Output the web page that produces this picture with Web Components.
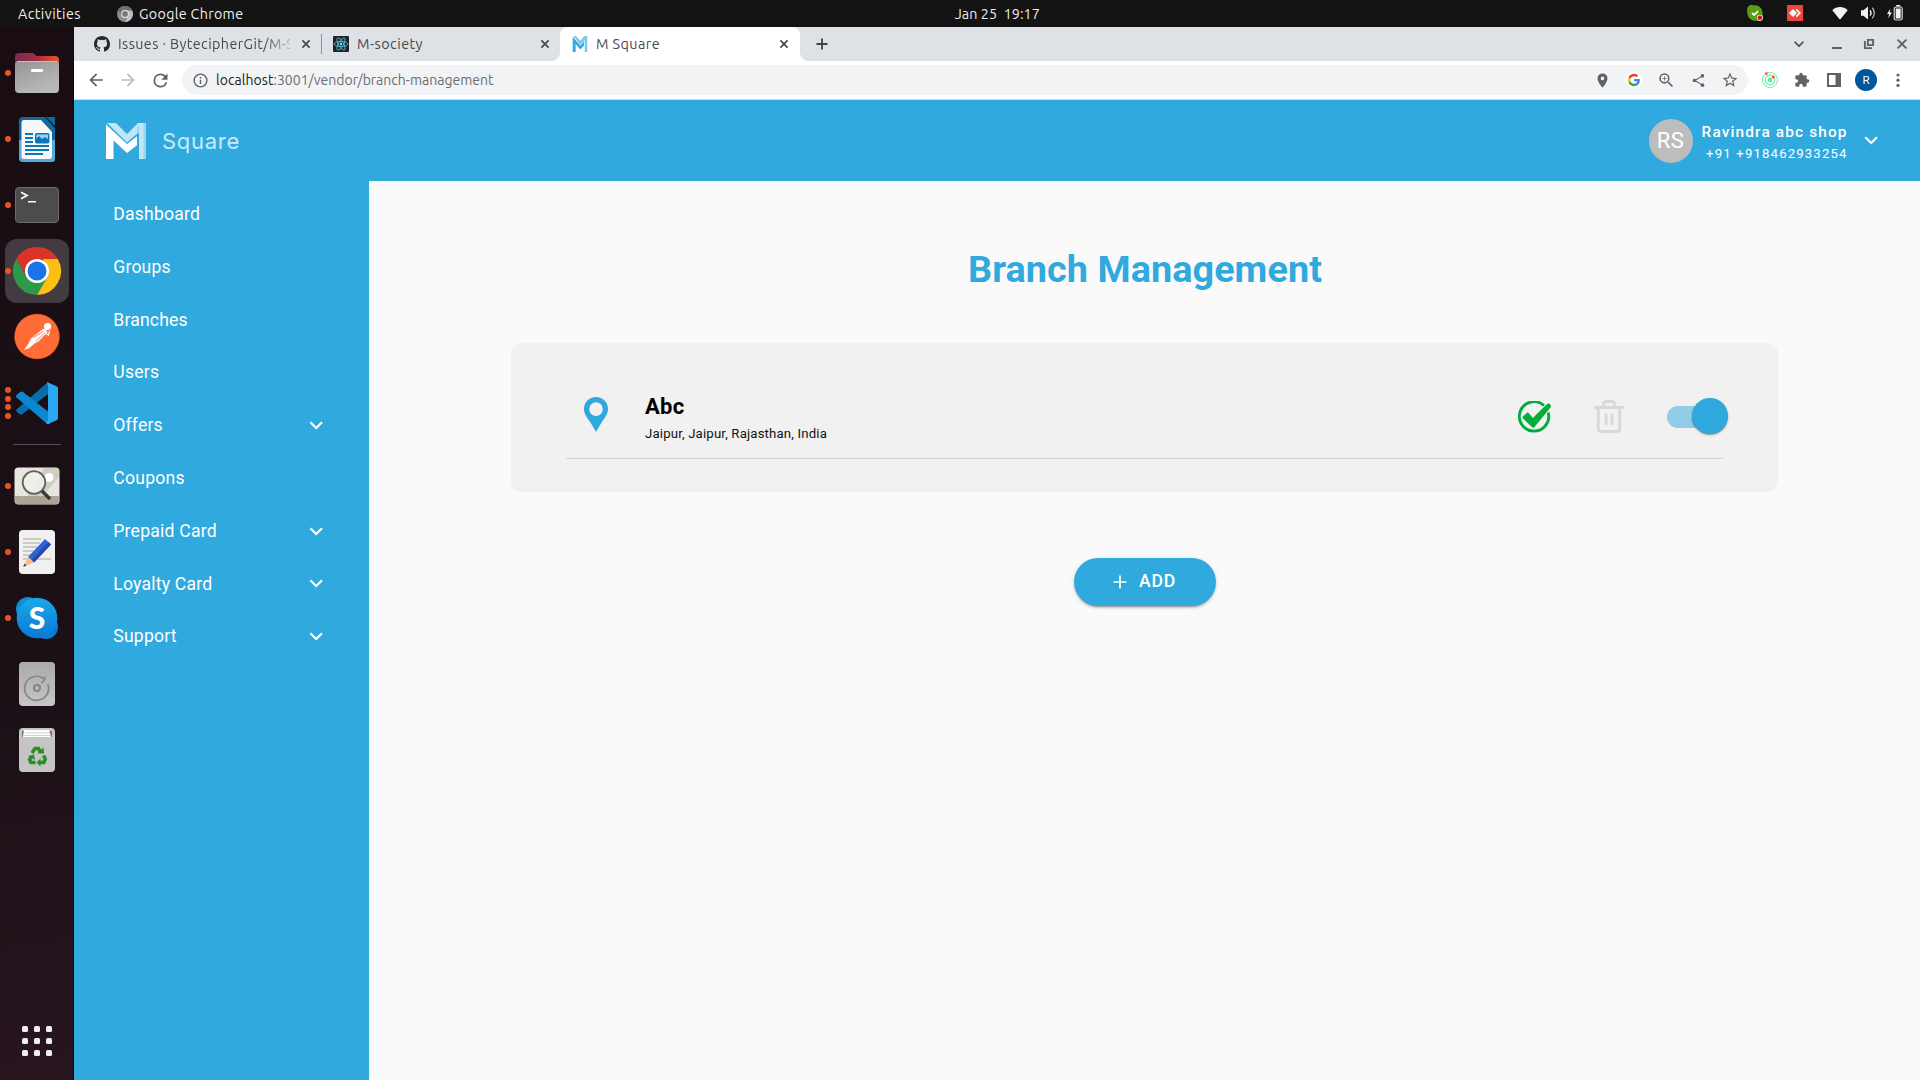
<!DOCTYPE html>
<html lang="en">
<head>
<meta charset="utf-8">
<title>M Square</title>
<style>
html,body{margin:0;height:100%;overflow:hidden;background:#131313}
</style>
</head>
<body>
<desktop-screen></desktop-screen>
<script>
const def=(name,html,extra)=>{
  const t=document.createElement('template');t.innerHTML=html;
  customElements.define(name,class extends HTMLElement{
    connectedCallback(){
      if(this.shadowRoot)return;
      this.attachShadow({mode:'open'}).append(t.content.cloneNode(true));
      if(extra)extra.call(this,this.shadowRoot);
    }
  });
};

/* A one-line label whose tracking is adjusted so it spans the "w" attribute. */
def('fit-text',`<style>:host{display:inline-block;white-space:pre;flex:none}span{display:inline-block}</style><span><slot></slot></span>`,function(r){
  const w=parseFloat(this.getAttribute('w'));
  const s=r.querySelector('span'),n=this.textContent.length;
  const fit=()=>{s.style.letterSpacing='0px';const c=s.getBoundingClientRect().width;if(c)s.style.letterSpacing=((w-c)/n)+'px';this.style.width=w+'px'};
  requestAnimationFrame(fit);fit();
});

/* Small icon set */
const ICONS={
 chevron:['0 0 24 24','<path fill="currentColor" d="M7.41 8.59 12 13.17l4.59-4.58L18 10l-6 6-6-6z"/>'],
 close:['0 0 16 16','<path d="M4.4 4.4l7.2 7.2M11.6 4.4l-7.2 7.2" stroke="currentColor" stroke-width="1.7" fill="none"/>'],
 wclose:['0 0 16 16','<path d="M3.6 3.6l8.8 8.8M12.4 3.6l-8.8 8.8" stroke="currentColor" stroke-width="2" fill="none"/>'],
 wmin:['0 0 16 16','<path d="M3 11h10v2H3z" fill="currentColor"/>'],
 wrestore:['0 0 16 16','<path d="M6.9 3.9h5.2v5.2H6.9z" stroke="currentColor" stroke-width="1.9" fill="none"/><path d="M3.9 5v7.1H11" stroke="currentColor" stroke-width="1.9" fill="none"/>'],
 plus:['0 0 16 16','<path d="M8 2.500v11M2.500 8h11" stroke="currentColor" stroke-width="1.8"/>'],
 addplus:['0 0 14 14','<path d="M7 .500v13M.500 7h13" stroke="currentColor" stroke-width="1.7"/>'],
 back:['0 0 24 24','<path fill="currentColor" d="M20 11H7.83l5.59-5.59L12 4l-8 8 8 8 1.41-1.41L7.83 13H20z"/>'],
 fwd:['0 0 24 24','<path fill="currentColor" d="M12 4l-1.41 1.41L16.17 11H4v2h12.17l-5.58 5.59L12 20l8-8z"/>'],
 reload:['0 0 24 24','<path fill="currentColor" d="M17.65 6.35A7.96 7.96 0 0 0 12 4a8 8 0 1 0 7.73 10h-2.08A6 6 0 1 1 12 6c1.66 0 3.14.69 4.22 1.78L13 11h7V4z"/>'],
 info:['0 0 24 24','<path fill="currentColor" d="M11 7h2v2h-2zm0 4h2v6h-2zm1-9a10 10 0 1 0 0 20 10 10 0 0 0 0-20zm0 18a8 8 0 1 1 0-16 8 8 0 0 1 0 16z"/>'],
 place:['0 0 24 24','<path fill="currentColor" d="M12 2a7 7 0 0 0-7 7c0 5.25 7 13 7 13s7-7.75 7-13a7 7 0 0 0-7-7zm0 9.5a2.5 2.5 0 1 1 0-5 2.5 2.5 0 0 1 0 5z"/>'],
 google:['0 0 48 48','<circle cx="24" cy="24" r="24" fill="#fff"/><g transform="translate(5.5 5.5) scale(.77)"><path fill="#EA4335" d="M24 9.5c3.54 0 6.71 1.22 9.21 3.6l6.85-6.85C35.9 2.38 30.47 0 24 0 14.62 0 6.51 5.38 2.56 13.22l7.98 6.19C12.43 13.72 17.74 9.5 24 9.5z"/><path fill="#4285F4" d="M46.98 24.55c0-1.57-.15-3.09-.38-4.55H24v9.02h12.94c-.58 2.96-2.26 5.48-4.78 7.18l7.73 6c4.51-4.18 7.09-10.36 7.09-17.65z"/><path fill="#FBBC05" d="M10.53 28.59a14.5 14.5 0 0 1 0-9.18l-7.98-6.19a24 24 0 0 0 0 21.56z"/><path fill="#34A853" d="M24 48c6.48 0 11.93-2.13 15.89-5.81l-7.73-6c-2.15 1.45-4.92 2.3-8.16 2.3-6.26 0-11.57-4.22-13.47-9.91l-7.98 6.19C6.51 42.62 14.62 48 24 48z"/></g>'],
 zoom:['0 0 24 24','<path fill="currentColor" d="M15.5 14h-.79l-.28-.27A6.47 6.47 0 0 0 16 9.5 6.5 6.5 0 1 0 9.5 16c1.61 0 3.09-.59 4.23-1.57l.27.28v.79l5 4.99L20.49 19zm-6 0a4.5 4.5 0 1 1 0-9 4.5 4.5 0 0 1 0 9zM10 7H9v2H7v1h2v2h1v-2h2V9h-2z" transform="translate(-1.6 -1.6) scale(1.12)"/>'],
 share:['0 0 24 24','<path d="M18 5L6 12l12 7" stroke="currentColor" stroke-width="1.8" fill="none"/><g fill="currentColor"><circle cx="18.3" cy="4.6" r="2.9"/><circle cx="5.5" cy="12" r="2.9"/><circle cx="18.3" cy="19.4" r="2.9"/></g>'],
 star:['0 0 24 24','<path fill="currentColor" d="M22 9.24l-7.19-.62L12 2 9.19 8.63 2 9.24l5.46 4.73L5.82 21 12 17.27 18.18 21l-1.63-7.03zM12 15.4l-3.76 2.27 1-4.28-3.32-2.88 4.38-.38L12 6.1l1.71 4.04 4.38.38-3.32 2.88 1 4.28z"/>'],
 orbit:['0 0 16 16','<g fill="none" stroke="#6ff0a0" stroke-width="1"><circle cx="8" cy="8" r="7.5"/><circle cx="8" cy="8" r="4.8" stroke="#6fe8b8" stroke-width="1.2"/></g><circle cx="8" cy="8" r="2.4" fill="#5ff09a"/><circle cx="4.3" cy="1.7" r="1.6" fill="#ff7a3c"/><circle cx="11.3" cy="5" r="1.6" fill="#ff5a2c"/>'],
 puzzle:['0 0 24 24','<path fill="currentColor" d="M20.5 11H19V7a2 2 0 0 0-2-2h-4V3.5a2.5 2.5 0 0 0-5 0V5H4a2 2 0 0 0-2 2v3.8h1.5a2.7 2.7 0 0 1 0 5.4H2V20a2 2 0 0 0 2 2h3.8v-1.5a2.7 2.7 0 0 1 5.4 0V22H17a2 2 0 0 0 2-2v-4h1.5a2.5 2.5 0 0 0 0-5z"/>'],
 panel:['0 0 16 16','<path fill="currentColor" fill-rule="evenodd" d="M1 1h14v14H1zM3 3v10h6.5V3z"/>'],
 more:['0 0 16 16','<g fill="currentColor"><circle cx="8" cy="3" r="1.6"/><circle cx="8" cy="8.2" r="1.6"/><circle cx="8" cy="13.4" r="1.6"/></g>'],
 github:['0 0 16 16','<path fill="#24292f" d="M8 0C3.58 0 0 3.58 0 8c0 3.54 2.29 6.53 5.47 7.59.4.07.55-.17.55-.38 0-.19-.01-.82-.01-1.49-2.01.37-2.53-.49-2.69-.94-.09-.23-.48-.94-.82-1.13-.28-.15-.68-.52-.01-.53.63-.01 1.08.58 1.23.82.72 1.21 1.87.87 2.33.66.07-.52.28-.87.51-1.07-1.78-.2-3.64-.89-3.64-3.95 0-.87.31-1.59.82-2.15-.08-.2-.36-1.02.08-2.12 0 0 .67-.21 2.2.82a7.6 7.6 0 0 1 4 0c1.53-1.04 2.2-.82 2.2-.82.44 1.1.16 1.92.08 2.12.51.56.82 1.27.82 2.15 0 3.07-1.87 3.75-3.65 3.95.29.25.54.73.54 1.48 0 1.07-.01 1.93-.01 2.2 0 .21.15.46.55.38A8 8 0 0 0 16 8c0-4.42-3.58-8-8-8z"/>'],
 react:['0 0 16 16','<rect width="16" height="16" rx="1" fill="#20232a"/><g fill="none" stroke="#5bc4df" stroke-width=".8"><ellipse cx="8" cy="8" rx="6.8" ry="2.6"/><ellipse cx="8" cy="8" rx="6.8" ry="2.6" transform="rotate(60 8 8)"/><ellipse cx="8" cy="8" rx="6.8" ry="2.6" transform="rotate(120 8 8)"/></g><circle cx="8" cy="8" r="1.4" fill="#61dafb"/>'],
 mtab:['0 0 40 44','<path fill="#7cc8ea" d="M1 0H9L21 13 32 0h8v44h-7V12L21 25z"/><path fill="#2fa9dd" d="M0 2L21 27 31 16v10L21 37 8 22v22H0z"/>'],
 mlogo:['0 0 40 36','<path fill="#c1e5f5" d="M1 0H10L21 11 32 0h8v36h-7V9L21 19.5z"/><path fill="#9ad5ef" d="M37.500 0H40v36h-2.500zM31 4l2-2v7.500l-2 2z"/><path fill="#fff" d="M0 1.500L21 21 31 13.200v9L21 30 7.500 17.500V36H0z"/>'],
 chromegrey:['0 0 16 16','<circle cx="8" cy="8" r="8" fill="#8c8c8c"/><path fill="#6f6f6f" d="M1 4A8 8 0 0 1 15 4H8L4.500 10z"/><path fill="#c0c0c0" d="M15.200 5A8 8 0 0 1 8 16L12 8.500 11 5z"/><circle cx="8" cy="8" r="3.900" fill="#eee"/><circle cx="8" cy="8" r="2.900" fill="#777"/>'],
 skypetray:['0 0 16 16','<path fill="#5a9b14" d="M4.500 0C6 0 6.500.400 7.500.400a7.500 7.500 0 0 1 8 8.500c.600 3-1 6.600-4.500 6.900C6 16.500 1 14 .500 9-.400 5 0 0 4.500 0z"/><path d="M5 8l2.200 2L11 6.200" stroke="#fff" stroke-width="1.700" fill="none"/><circle cx="12.900" cy="12.800" r="3.100" fill="#f4dede"/><circle cx="12.900" cy="12.800" r="2.300" fill="#d4141c"/>'],
 anydesk:['0 0 16 16','<path fill="#ef443b" d="M0 0h16v16H0z"/><path fill="#fff" d="M2 8l4-4 4 4-4 4zM8.600 5l1.200-1.200L14 8l-4.200 4.200L8.600 11l3-3z"/>'],
 wifi:['0 0 16 16','<path fill="#f2f2f2" d="M.300 5.200C4.500.900 11.500.900 15.700 5.200L8.600 14a.800.800 0 0 1-1.200 0z"/>'],
 volume:['0 0 16 16','<path fill="#f2f2f2" d="M1 5.200h2.500L8 1.400v13.200L3.500 10.800H1z"/><path d="M10 5.400a4 4 0 0 1 0 5.200" stroke="#f2f2f2" stroke-width="1.300" fill="none"/><path d="M12.200 2.800a7.500 7.500 0 0 1 0 10.400" stroke="#b8b8b8" stroke-width="1.300" fill="none"/>'],
 battery:['0 0 16 16','<path fill="#f2f2f2" d="M3.400 3.800L0 9h2.100l-.900 4.300L5 7.600H2.700z"/><rect x="7.200" y="2" width="8" height="13" rx="1.800" fill="none" stroke="#d8d8d8" stroke-width="1.200"/><path fill="#f2f2f2" d="M9.200 0h4v1.600h-4zM8.700 3.600h5v9.800h-5z"/>'],
 pin:['0 0 24 35','<path fill="#2fa9dd" fill-rule="evenodd" d="M12 0a12 12 0 0 0-12 12.300C0 17 3 20.500 6 25c2.600 4 4.500 7 6 10 1.500-3 3.400-6 6-10 3-4.500 6-8 6-12.700A12 12 0 0 0 12 0zm0 5.300a6.800 6.800 0 1 1 0 13.600 6.800 6.800 0 0 1 0-13.600z"/>'],
 check:['0 0 33 32','<path d="M26 4.600A14.700 14.700 0 1 0 30.200 11.500" fill="none" stroke="#00ae3b" stroke-width="2.900"/><path fill="#00ae3b" stroke="#f1f1f1" stroke-width="1.400" paint-order="stroke" d="M4.800 15.600L9 11.700q1-.700 1.800.300l4 5L28.800 3.200q1.700-1.600 3.300.100 1.500 1.700.400 3.300L16.500 25.900q-1.300 1.500-2.600.100L5 17.500q-1-1-.200-1.900z"/>'],
 trash:['0 0 30 33','<g fill="none" stroke="#d5d9dc" stroke-width="3" stroke-linecap="round" stroke-linejoin="round"><path d="M1.500 7.500h27M4.300 8v20.500q0 3 3 3h15.400q3 0 3-3V8M9.500 7V4.500q0-3 3-3h5q3 0 3 3V7M12.100 15v9M18 15v9" stroke-width="2.900"/></g>'],
};
def('ui-icon',`<style>:host{display:inline-flex;flex:none;align-items:center;justify-content:center}svg{display:block}</style>`,function(r){
  const [vb,body]=ICONS[this.getAttribute('name')];
  const w=this.getAttribute('w')||16,h=this.getAttribute('h')||w;
  const b=document.createElement('div');
  b.innerHTML=`<svg width="${w}" height="${h}" viewBox="${vb}">${body}</svg>`;r.append(b);
});

/* GNOME top bar */
def('top-bar',`<style>
:host{display:flex;height:27px;background:#131313;color:#eee;font:14.300px/27px Ubuntu,"Noto Sans",sans-serif;align-items:center}
.l,.r{flex:1;display:flex;align-items:center}
.l{padding-left:18px;box-sizing:border-box}.l ui-icon{margin:0 6px 0 36px}
.r{justify-content:flex-end;padding-right:17.500px}
.r{margin-top:-1px}
.c{padding-right:0;margin-left:74px}
fit-text{height:27px;line-height:28px}
</style>
<div class="l"><fit-text w="63">Activities</fit-text><ui-icon name="chromegrey"></ui-icon><fit-text w="104.5">Google Chrome</fit-text></div>
<div class="c"><fit-text w="85">Jan 25  19:17</fit-text></div>
<div class="r"><ui-icon name="skypetray" style="margin-right:24px"></ui-icon><ui-icon name="anydesk" style="margin-right:29px"></ui-icon><ui-icon name="wifi" style="margin-right:12px"></ui-icon><ui-icon name="volume" style="margin-right:11px"></ui-icon><ui-icon name="battery"></ui-icon></div>`);

/* Dock */
def('dock-item',`<style>
:host{display:block;position:relative;width:64px;height:64px;flex:none;border-radius:12px}
:host([active]){background:#443b42}
.d{position:absolute;left:0;top:0;height:64px;display:flex;flex-direction:column;justify-content:center;gap:2.700px}
i{width:6px;height:6px;border-radius:50%;background:#e95420}
</style><slot></slot><div class="d"></div>`,function(r){
  r.querySelector('.d').innerHTML='<i></i>'.repeat(+this.getAttribute('dots')||0);
});
def('app-dock',`<style>
:host{display:flex;flex-direction:column;width:74px;box-sizing:border-box;border-right:1px solid #08050a;padding:14px 0 7px 5px;gap:2px;background:linear-gradient(170deg,#190d13,#1a1016 60%,#27151f)}
svg{display:block;width:64px;height:64px}
hr{border:0;margin:7px 0 7px 8px;width:48px;height:1px;background:#57505a}
.sp{flex:1}
</style>
<dock-item dots="1"><svg viewBox="5 41 64 64"><defs><linearGradient id="f"><stop stop-color="#762a52"/><stop offset=".5" stop-color="#a33048"/><stop offset="1" stop-color="#e95420"/></linearGradient><linearGradient id="g" x1="0" y1="0" x2=".5" y2="1"><stop stop-color="#949494"/><stop offset="1" stop-color="#b9b9b9"/></linearGradient></defs><path fill="url(#f)" d="M15 57q0-4 4-4h13q2 0 3 1.500l1 1.500h19q4 0 4 4v10H15z"/><rect x="15" y="61" width="44" height="32" rx="4" fill="url(#g)"/><path d="M17 61.500h40" stroke="#c0c0c0" stroke-width="1"/><rect x="31" y="69" width="12" height="3" rx="1" fill="#fff"/></svg></dock-item>
<dock-item dots="1"><svg viewBox="5 107 64 64"><path fill="#0e6ba0" d="M23 117h22l10 11v33q0 1-4 1H23q-4 0-4-4v-37q0-4 4-4z"/><path fill="#53abd5" d="M19 140h36v18q0 4-4 4H23q-4 0-4-4z"/><path fill="#0e6ba0" d="M46 117h9v9z"/><path fill="#f6f8fa" d="M24 120h17l11 12v24q0 3-3 3H24q-2.500 0-2.500-3v-33q0-3 2.500-3z"/><path d="M25 134h8M25 138h8M25 142h8M25 146h24M25 150h24M25 154h18" stroke="#0878b8" stroke-width="2"/><rect x="35.700" y="133.700" width="13" height="9" rx="1" fill="#9bd2ef" stroke="#0878b8" stroke-width="1.400"/><path fill="#0878b8" d="M36 142v-3l3-3 3 3 3-2 3 2v3z"/></svg></dock-item>
<dock-item dots="1"><svg viewBox="5 173 64 64"><rect x="15.500" y="187.500" width="43" height="35" rx="3.500" fill="#4c4c4c" stroke="#6b6b6b"/><path d="M21 192.300l6 3.200-6 3.200" fill="none" stroke="#fff" stroke-width="1.700"/><path fill="#fff" d="M28 201h8v1.500h-8z"/></svg></dock-item>
<dock-item dots="1" active><svg viewBox="5 239 64 64"><path fill="#db3328" d="M16.200 259A24 24 0 0 1 57.800 259L37 260 27 277z"/><path fill="#2c9a48" d="M16.200 259A24 24 0 0 0 37 295L47.400 277 37 271 26.600 277z"/><path fill="#fcc014" d="M57.800 259A24 24 0 0 1 37 295L47.400 277 43 259z"/><circle cx="37" cy="271" r="12" fill="#fff"/><circle cx="37" cy="271" r="9.500" fill="#1a73e8"/></svg></dock-item>
<dock-item><svg viewBox="5 305 64 64"><circle cx="37" cy="336.500" r="22.500" fill="#ff6c37"/><circle cx="37" cy="336.500" r="22.300" fill="none" stroke="#d9541f" stroke-width=".6"/><circle cx="47.500" cy="326.500" r="3.600" fill="#fff"/><path fill="#fff" d="M43.500 328.500q3 .500 4 3.500L38.500 341.500l-4 2-5 4.500-5.500 2 4-5.500 3-6z"/><path d="M33.500 337.500l9.500-6M36 341.500l9-9" stroke="#ff6c37" stroke-width=".9" fill="none"/><path d="M45 333l3.500 2 1-4" stroke="#fff" stroke-width="1.200" fill="none"/></svg></dock-item>
<dock-item dots="4"><svg viewBox="5 371 64 64"><path fill="#0a6cab" d="M48 382L16.500 409.500q-1 1.500.500 2.500l2.500 2q1.500 1 3 0L48 394z"/><path fill="#0d86d0" d="M16.500 395l3.500-3q1.500-1 3 0L50 413v11l-4-1L16.500 397.500q-1-1.500 0-2.500z"/><path fill="#2aa6f2" d="M47 382l10 4.500q1 .5 1 1.500v30q0 1.500-1 2L48 424q-1 .300-2-1l2-3v-34z"/></svg></dock-item>
<hr>
<dock-item dots="1"><svg viewBox="5 454 64 64"><rect x="14.500" y="467.500" width="45" height="37" rx="4" fill="#e8e7df"/><path fill="#cfcec2" d="M44 468h12q3 0 3 3v6L43 496H27z"/><path fill="#aaa594" d="M15 496h44v5q0 3-3 3H18q-3 0-3-3z"/><circle cx="49" cy="477.500" r="4.500" fill="#fff"/><circle cx="34" cy="482.500" r="11.300" fill="#f1f1ec" fill-opacity=".85" stroke="#62625f" stroke-width="1.800"/><path d="M42 491l8 8" stroke="#393a38" stroke-width="3.500"/></svg></dock-item>
<dock-item dots="1"><svg viewBox="5 520 64 64"><rect x="19" y="530" width="36" height="44" rx="4" fill="#f0f0f0"/><path d="M23 539h18M23 543h17M23 547h15M23 551h13M23 555h10M23 559h28" stroke="#c4bfb2" stroke-width="1.600"/><path fill="#3263d5" d="M28 557l17-18 6 5.500-17 18z"/><path fill="#2448b0" d="M31.500 560l17-18 2.500 2.500-17 18z"/><path fill="#f8bd7c" d="M28 557l6 5.500-10 4z"/><path fill="#444" d="M24.500 563.500l2 2-3.300 1.500z"/></svg></dock-item>
<dock-item dots="1"><svg viewBox="5 586 64 64"><defs><linearGradient id="s" x2="0" y2="1"><stop stop-color="#1ba9e8"/><stop offset="1" stop-color="#0a78d6"/></linearGradient></defs><circle cx="28" cy="609" r="12" fill="#0b8fd8"/><circle cx="46" cy="627" r="12" fill="#0a7bd2"/><circle cx="37" cy="618" r="20.300" fill="url(#s)"/><text x="37" y="629" text-anchor="middle" font-family="Lato,sans-serif" font-weight="900" font-size="30" fill="#fff">S</text></svg></dock-item>
<dock-item><svg viewBox="5 652 64 64"><defs><linearGradient id="m" x2="0" y2="1"><stop stop-color="#aaa"/><stop offset="1" stop-color="#c6c6c6"/></linearGradient></defs><rect x="19" y="662" width="36" height="44" rx="4" fill="url(#m)"/><path d="M46.500 680.500a12 12 0 1 1-5-4M42 683.500l3.500-3.500M46.500 680.500l2.500 2" fill="none" stroke="#858585" stroke-width="0"/><path d="M47.800 683.500A12 12 0 1 1 43.500 678l2-2M41.500 682.500l4-4M47.800 683.500" fill="none" stroke="#858585" stroke-width="1.700" transform="translate(0 .5)"/><circle cx="37" cy="688" r="3" fill="none" stroke="#858585" stroke-width="2"/></svg></dock-item>
<dock-item><svg viewBox="5 718 64 64"><rect x="19" y="728" width="36" height="44" rx="4" fill="#c5c5c5"/><path fill="#777" d="M22 731h30v6H22z"/><path fill="#fff" d="M24 730h25l2 7H23z"/><path d="M25 733h24M24 735.500h26" stroke="#bbb" stroke-width=".700"/><g fill="none" stroke="#2c8d25" stroke-width="3.600"><path d="M32 753l3-4.500h3.500l2 3.500"/><path d="M43.500 755.500l1.800 3.500-1.500 3.500H40"/><path d="M35.500 762.500h-4.500l-1.400-3 1.700-3"/></g><path fill="#2c8d25" d="M37.500 753.500h6.500l-.5-6zM40.500 758.500v8l-4-4zM28 756l6-1.500 1 5.500z"/></svg></dock-item>
<div class="sp"></div>
<dock-item><svg viewBox="5 1009 64 64"><g fill="#eee"><rect x="22" y="1026" width="6" height="6" rx="1.500"/><rect x="34" y="1026" width="6" height="6" rx="1.500"/><rect x="46" y="1026" width="6" height="6" rx="1.500"/><rect x="22" y="1038" width="6" height="6" rx="1.500"/><rect x="34" y="1038" width="6" height="6" rx="1.500"/><rect x="46" y="1038" width="6" height="6" rx="1.500"/><rect x="22" y="1050" width="6" height="6" rx="1.500"/><rect x="34" y="1050" width="6" height="6" rx="1.500"/><rect x="46" y="1050" width="6" height="6" rx="1.500"/></g></svg></dock-item>`);

/* Browser tab */
def('browser-tab',`<style>
:host{display:flex;width:239px;box-sizing:border-box;height:34px;padding:0 7px 0 12px;align-items:center;gap:8px;color:#45494d;position:relative}
:host([active]){width:240px;background:#fff;border-radius:8px 8px 0 0;padding-right:8px;z-index:1}
:host([active])::before,:host([active])::after{content:"";position:absolute;bottom:0;width:8px;height:8px}
:host([active])::before{left:-8px;background:radial-gradient(circle at 0 0,#dee1e6 7.500px,#fff 8px)}
:host([active])::after{right:-8px;background:radial-gradient(circle at 100% 0,#dee1e6 7.500px,#fff 8px)}
:host([sep])::after{content:"";position:absolute;right:-1px;top:7px;width:1px;height:20px;background:#8d9196}
.t{flex:1;overflow:hidden;height:34px;line-height:35px}
:host([fade]) .t{-webkit-mask:linear-gradient(90deg,#000 146px,transparent 180px)}
</style><div class="t"><slot></slot></div><ui-icon name="close"></ui-icon>`,function(r){
  const i=document.createElement('ui-icon');i.setAttribute('name',this.getAttribute('icon'));i.setAttribute('w',16);
  r.querySelector('.t').before(i);
});
def('tab-strip',`<style>
:host{display:flex;height:34px;background:#dee1e6;padding-left:8px;align-items:center;color:#5f6368;font:14.300px Ubuntu,"Noto Sans",sans-serif}
.c{margin-left:auto;display:flex;padding-right:10px}
.n{margin-left:14px;color:#3c4043}
</style>
<browser-tab icon="github" sep fade><fit-text w="185">Issues · BytecipherGit/M-So</fit-text></browser-tab>
<browser-tab icon="react"><fit-text w="66">M-society</fit-text></browser-tab>
<browser-tab icon="mtab" active><fit-text w="64">M Square</fit-text></browser-tab>
<ui-icon class="n" name="plus"></ui-icon>
<div class="c"><ui-icon name="chevron" w="20" style="margin-right:20px;color:#45494d"></ui-icon><ui-icon name="wmin" style="margin-right:16px"></ui-icon><ui-icon name="wrestore" style="margin-right:17px"></ui-icon><ui-icon name="wclose"></ui-icon></div>`);

def('tool-bar',`<style>
:host{display:flex;height:38px;background:#fff;border-bottom:1px solid #d8dde0;align-items:center;color:#5f6368;padding:0 6px;font:14px Ubuntu,"Noto Sans",sans-serif}
ui-icon{width:32px}
.o{flex:1;display:flex;align-items:center;height:30px;border-radius:15px;background:#f1f3f4;margin:0 6px;padding:0 2px 0 10px}
.o .i{width:16px;margin-right:8px}
.u{display:flex;flex:1;line-height:28px;color:#6a6e73}
.a{width:32px;display:flex;justify-content:center}
.a span{width:22px;height:22px;border-radius:50%;background:#01579b;color:#fff;font:11.500px/22px Roboto,sans-serif;text-align:center}
</style>
<ui-icon name="back" w="20"></ui-icon><ui-icon name="fwd" w="20" style="color:#babcbe"></ui-icon><ui-icon name="reload" w="21"></ui-icon>
<div class="o"><ui-icon class="i" name="info" w="17"></ui-icon><div class="u"><fit-text w="57.5" style="color:#202124">localhost</fit-text><fit-text w="220">:3001/vendor/branch-management</fit-text></div>
<ui-icon name="place" w="17"></ui-icon><ui-icon name="google" w="16"></ui-icon><ui-icon name="zoom" w="17"></ui-icon><ui-icon name="share" w="15"></ui-icon><ui-icon name="star" w="18"></ui-icon></div>
<ui-icon name="orbit"></ui-icon><ui-icon name="puzzle" w="16"></ui-icon><ui-icon name="panel"></ui-icon><div class="a"><span>R</span></div><ui-icon name="more"></ui-icon>`);

/* Web application */
def('app-header',`<style>
:host{display:flex;height:81px;align-items:center;background:#30a9de;color:#fff;padding:0 36px 0 32px}
.s{font:400 22px/30px Inter,sans-serif;color:#c9eaf8;margin-left:16px}
.a{margin-left:auto;width:44px;height:44px;border-radius:50%;background:#bdbdbd;font:22px/44px Roboto,sans-serif;text-align:center;display:flex;justify-content:center}
.n{display:flex;flex-direction:column;align-items:flex-end;margin:4px 10px 0 9px;width:146px;font-family:Roboto,sans-serif}
.n1{font-size:15.400px;font-weight:500;line-height:22px}.n2{font-size:13.200px;line-height:22px}
</style><ui-icon name="mlogo" w="40" h="36"></ui-icon><fit-text class="s" w="78">Square</fit-text>
<div class="a"><fit-text w="27.5">RS</fit-text></div><div class="n"><fit-text class="n1" w="146">Ravindra abc shop</fit-text><fit-text class="n2" w="141.500">+91 +918462933254</fit-text></div><ui-icon name="chevron" w="26.4"></ui-icon>`);
def('nav-item',`<style>:host{display:flex;height:52.800px;align-items:center;justify-content:space-between;padding:0 40px 0 39.300px;font:17.600px/26px Roboto,sans-serif;color:#fff}</style><slot></slot>`,function(r){
  if(this.hasAttribute('more')){const i=document.createElement('ui-icon');i.setAttribute('name','chevron');i.setAttribute('w','26.4');r.append(i)}
});
def('side-nav',`<style>:host{display:block;width:295px;box-sizing:border-box;background:#30a9de;padding-top:6.700px}</style>
<nav-item><fit-text w="86.7">Dashboard</fit-text></nav-item><nav-item><fit-text w="57.5">Groups</fit-text></nav-item><nav-item><fit-text w="74.5">Branches</fit-text></nav-item><nav-item><fit-text w="46">Users</fit-text></nav-item><nav-item more><fit-text w="49.5">Offers</fit-text></nav-item><nav-item><fit-text w="71.5">Coupons</fit-text></nav-item><nav-item more><fit-text w="103.5">Prepaid Card</fit-text></nav-item><nav-item more><fit-text w="99">Loyalty Card</fit-text></nav-item><nav-item more><fit-text w="63.5">Support</fit-text></nav-item>`);
def('toggle-switch',`<style>:host{display:flex;width:61px;height:36px;align-items:center;justify-content:flex-end;position:relative}
.t{position:absolute;left:0;top:8px;width:54px;height:22px;border-radius:11px;background:#2fa9dd;opacity:.5}
.k{width:36px;height:36px;border-radius:50%;background:#2fa9dd;position:relative;box-shadow:0 1px 1px rgba(0,0,0,.3),0 1px 3px rgba(0,0,0,.16)}</style><div class="t"></div><div class="k"></div>`);
def('branch-row',`<style>
:host{display:flex;border-bottom:1px solid #d4d4d4;height:76px;align-items:flex-start;font-family:Roboto,sans-serif;color:#000}
.p{margin:15px 37.500px 0 17.500px}
.x{display:flex;flex-direction:column;flex:1;padding-top:11px}
.n{font-size:22px;font-weight:700;line-height:28px}.d{font-size:13.200px;line-height:26px;color:#111}
.k{margin:19px 43px 0 0}.t{margin:18px 43px 0 0}
toggle-switch{margin:16px -5px 0 0}
</style><ui-icon class="p" name="pin" w="24" h="35"></ui-icon>
<div class="x"><fit-text class="n" w="39.500">Abc</fit-text><fit-text class="d" w="182">Jaipur, Jaipur, Rajasthan, India</fit-text></div>
<ui-icon class="k" name="check" w="33" h="32"></ui-icon><ui-icon class="t" name="trash" w="30" h="33"></ui-icon><toggle-switch></toggle-switch>`);
def('add-button',`<style>:host{display:flex;width:142px;height:48px;border-radius:24px;background:#30a9de;color:#fff;align-items:center;box-sizing:border-box;padding-left:39px;gap:12.500px;font:500 17.600px/24px Roboto,sans-serif;box-shadow:0 3px 1px -2px rgba(0,0,0,.2),0 2px 2px rgba(0,0,0,.14),0 1px 5px rgba(0,0,0,.12)}
fit-text{margin-top:-3px}</style><ui-icon name="addplus" w="14"></ui-icon><fit-text w="37">ADD</fit-text>`);
def('branch-page',`<style>
:host{display:flex;flex-direction:column;flex:1;background:#fafafa;align-items:center;padding:63px 0 0 0}
h1{margin:0 0 0 1px;font:700 37.800px/50px Roboto,sans-serif;color:#30a9de;display:flex}
.card{width:1267px;height:149px;margin:49px 0 66px;background:#f1f1f1;border-radius:11px;box-sizing:border-box;padding:39px 55px 0}
</style><h1><fit-text w="354">Branch Management</fit-text></h1><div class="card"><branch-row></branch-row></div><add-button></add-button>`);
def('browser-window',`<style>:host{display:flex;flex-direction:column;flex:1;min-width:0}.b{flex:1;display:flex}</style>
<tab-strip></tab-strip><tool-bar></tool-bar><app-header></app-header><div class="b"><side-nav></side-nav><branch-page></branch-page></div>`);
def('desktop-screen',`<style>:host{display:flex;flex-direction:column;width:1920px;height:1080px;overflow:hidden}.m{flex:1;display:flex;min-height:0}</style>
<top-bar></top-bar><div class="m"><app-dock></app-dock><browser-window></browser-window></div>`);
</script>
</body>
</html>
